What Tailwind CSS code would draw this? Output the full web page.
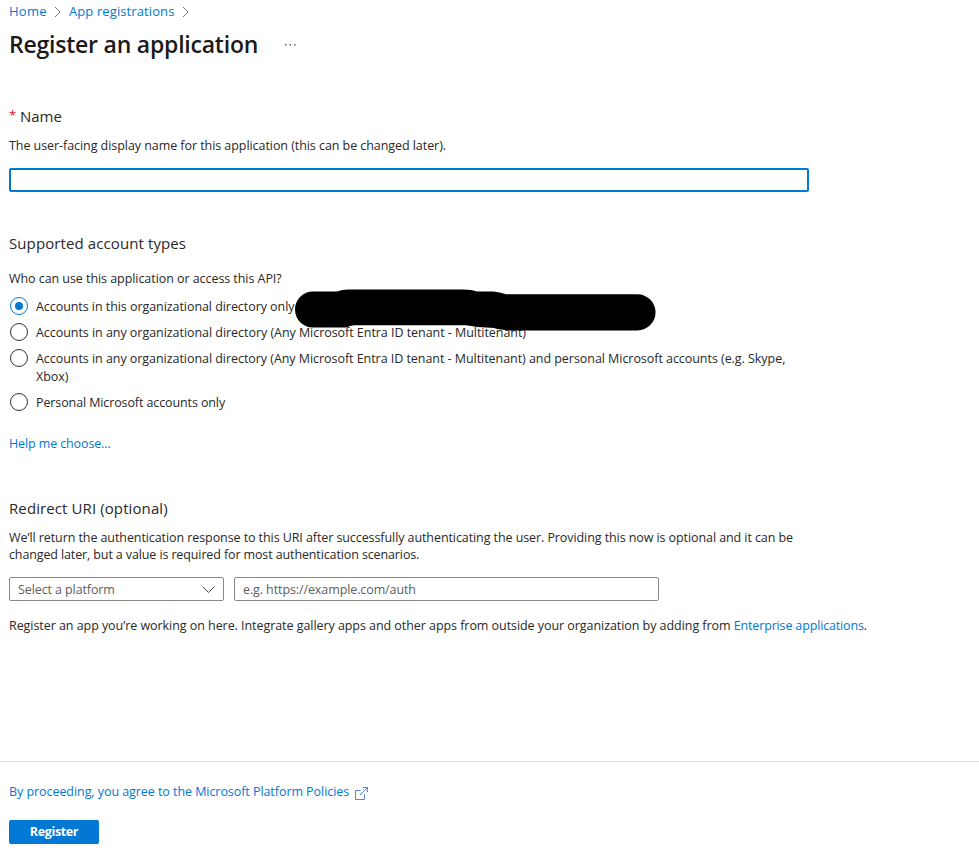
<!DOCTYPE html>
<html lang="en">
<head>
<meta charset="utf-8">
<title>Register an application</title>
<script src="https://cdn.jsdelivr.net/npm/@tailwindcss/browser@4"></script>
</head>
<body class="bg-white font-['Open_Sans','Noto_Sans',sans-serif] text-[12.5px] tracking-[-0.06px] text-[#292827]">
<div class="flex h-[855px] flex-col overflow-hidden whitespace-nowrap">
  <main class="flex h-[761px] flex-col px-[9px]">
    <nav class="flex h-[24px] items-center text-[13px] tracking-[0.1px] text-[#0078d4]">
      <a class="w-[45px] tracking-[0.25px]">Home</a>
      <svg class="mr-[7px] h-[12px] w-[8px]" viewBox="0 0 8 12" fill="none" stroke="#777" stroke-width="1"><path d="M1 1l5 5-5 5"/></svg>
      <a class="w-[113px]">App registrations</a>
      <svg class="h-[12px] w-[8px]" viewBox="0 0 8 12" fill="none" stroke="#777" stroke-width="1"><path d="M1 1l5 5-5 5"/></svg>
    </nav>
    <header class="mt-[2px] flex h-[36px] items-center">
      <h1 class="w-[276px] text-[23px] font-semibold tracking-[-0.22px] text-[#1b1a19]">Register an application</h1>
      <svg class="mt-[2px] h-[2px] w-[12px]" viewBox="0 0 12 2" fill="#666"><path d="M0 0h1.5v1.5H0zM4.5 0H6v1.5H4.500zM9 0h1.5v1.5H9z"/></svg>
    </header>
    <section class="mt-[43px]">
      <h2 class="flex h-[22px] items-center gap-[4px] text-[15px]"><span class="text-[13px] text-[#e00b1c]">*</span><span>Name</span></h2>
      <p class="mt-[10px] leading-[18px]">The user-facing display name for this application (this can be changed later).</p>
      <input class="mt-[13px] block h-[24px] w-[800px] rounded-[2px] border-2 border-[#0078d4] outline-none">
    </section>
    <section class="mt-[40px]">
      <h2 class="flex h-[22px] items-center text-[15px] tracking-[0.1px]">Supported account types</h2>
      <p class="mt-[16px] leading-[18px]">Who can use this application or access this API?</p>
      <div class="relative mt-[10px] flex flex-col gap-2 leading-[18px]">
        <label class="flex gap-[8px] pl-px"><span class="-mt-px flex size-[18px] items-center justify-center rounded-full border border-[#0078d4]"><span class="size-[8px] rounded-full bg-[#0078d4]"></span></span><span>Accounts in this organizational directory only</span></label>
        <label class="flex gap-[8px] pl-px tracking-[-0.045px]"><span class="-mt-px size-[18px] rounded-full border border-[#323130]"></span><span>Accounts in any organizational directory (Any Microsoft Entra ID tenant - Multitenant)</span></label>
        <label class="flex gap-[8px] pl-px tracking-[-0.048px]"><span class="-mt-px size-[18px] rounded-full border border-[#323130]"></span><span>Accounts in any organizational directory (Any Microsoft Entra ID tenant - Multitenant) and personal Microsoft accounts (e.g. Skype,<br>Xbox)</span></label>
        <label class="flex gap-[8px] pl-px tracking-[-0.11px]"><span class="-mt-px size-[18px] rounded-full border border-[#323130]"></span><span>Personal Microsoft accounts only</span></label>
        <svg class="absolute -top-[9px] left-[285px] h-[44px] w-[364px]" viewBox="294 289 364 44"><path d="M313 291.500H337Q342 289.500 348 289.500H463Q472 289.500 477 291.500H493Q500 292 506 294.300H637.500A18 18 0 0 1 637.500 330.400H510Q500 330 494 328Q480 328 466 325.200H354Q350 325.500 346 327.500H313A18 18 0 0 1 313 291.500Z"/></svg>
      </div>
      <p class="mt-[23px] leading-[18px] tracking-[-0.12px] text-[#0078d4]">Help me choose...</p>
    </section>
    <section class="mt-[44px]">
      <h2 class="flex h-[22px] items-center text-[15px] tracking-[0.1px]">Redirect URI (optional)</h2>
      <p class="mt-[10px] leading-[17px] tracking-[-0.083px]">We’ll return the authentication response to this URI after successfully authenticating the user. Providing this now is optional and it can be<br><span class="tracking-[-0.12px]">changed later, but a value is required for most authentication scenarios.</span></p>
      <div class="mt-[14px] flex gap-[10px] tracking-[-0.1px] text-[#605e5c]">
        <div class="flex h-[24px] w-[215px] items-center justify-between rounded-[2px] border border-[#8a8886] px-[8px]"><span class="pt-[2px]">Select a platform</span><svg class="mt-px h-[8px] w-[13px]" viewBox="0 0 13 8" fill="none" stroke="#484644"><path d="M.5.5l6 6 6-6"/></svg></div>
        <div class="flex h-[24px] w-[425px] items-center rounded-[2px] border border-[#8a8886] px-[8px]"><span class="pt-[2px]">e.g. https://example.com/auth</span></div>
      </div>
      <p class="mt-[16px] leading-[18px] tracking-[-0.056px]">Register an app you’re working on here. Integrate gallery apps and other apps from outside your organization by adding from <a class="tracking-[-0.15px] text-[#0078d4]">Enterprise applications</a>.</p>
    </section>
  </main>
  <footer class="h-[94px] border-t border-[#dddddd] px-[9px] pt-[20px]">
    <a class="flex h-[20px] items-center gap-[6px] text-[#0078d4]"><span>By proceeding, you agree to the Microsoft Platform Policies</span><svg class="mt-[2px] h-[13px] w-[13px]" viewBox="0 0 13 13" fill="none" stroke="#4f86dc" stroke-width="1"><path d="M5.500 3.500H.5v9h9V7.500M8 .5h4.500V5M12.500.5L5 8"/></svg></a>
    <button class="mt-[18px] flex h-[24px] w-[90px] items-center justify-center rounded-[2px] bg-[#0078d4] font-bold tracking-[-0.35px] text-white">Register</button>
  </footer>
</div>
</body>
</html>
